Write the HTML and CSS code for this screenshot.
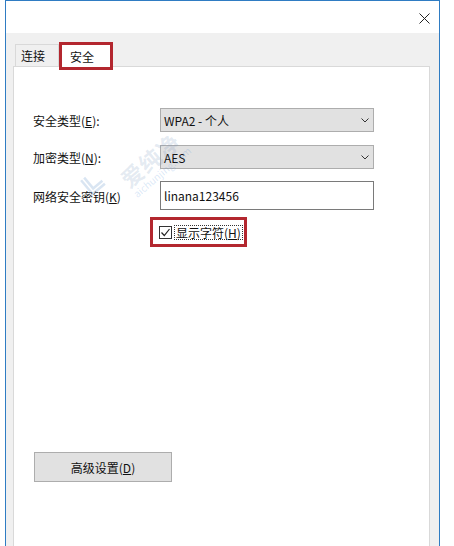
FILE: index.html
```html
<!DOCTYPE html>
<html lang="zh-CN">
<head>
<meta charset="utf-8">
<title>安全</title>
<link rel="stylesheet" href="styles.css">
</head>
<body>
<div class="window">
  <div class="titlebar">
    <svg class="close" width="11" height="11" viewBox="0 0 11 11"><path d="M0.5 0.5 L10.5 10.5 M10.5 0.5 L0.5 10.5" stroke="#222" stroke-width="1" fill="none"/></svg>
  </div>
  <div class="tabs">
    <div class="tab">连接</div>
    <div class="tab selected">安全</div>
  </div>
  <div class="panel">
    <div class="form">
      <div class="label">安全类型(<u>E</u>):</div>
      <div class="combo"><span>WPA2 - 个人</span><svg width="8" height="5" viewBox="0 0 8 5"><path d="M0.5 0.5 L4 4 L7.5 0.5" stroke="#333" fill="none"/></svg></div>
      <div class="label">加密类型(<u>N</u>):</div>
      <div class="combo"><span>AES</span><svg width="8" height="5" viewBox="0 0 8 5"><path d="M0.5 0.5 L4 4 L7.5 0.5" stroke="#333" fill="none"/></svg></div>
      <div class="label">网络安全密钥(<u>K</u>)</div>
      <div class="textbox">linana123456</div>
      <div></div>
      <div class="checkrow">
        <span class="checkbox"><svg width="11" height="11" viewBox="0 0 11 11"><path d="M1.5 5.5 L4.3 8.5 L9.5 2" stroke="#222" stroke-width="1.2" fill="none"/></svg></span>
        <span class="checklabel">显示字符(<u>H</u>)</span>
      </div>
    </div>
    <div class="button">高级设置(<u>D</u>)</div>
    <div class="watermark">
      <svg class="wm-logo" width="22" height="26" viewBox="0 0 22 26"><path d="M3 4 L3 22 L19 22 M7 4 L7 18 L19 18" stroke="rgba(120,160,210,0.28)" stroke-width="2.5" fill="none"/></svg>
      <div class="wm-text"><span class="wm-big">爱纯净</span><span class="wm-small">aichunjing.com</span></div>
    </div>
  </div>
</div>
</body>
</html>
```

FILE: styles.css
```css
html, body {
  margin: 0;
  padding: 0;
  background: #ffffff;
  overflow: hidden;
}
body {
  font-family: "Noto Sans CJK SC", "Noto Sans", sans-serif;
  font-size: 12px;
  color: #111;
}
u { text-decoration: underline; text-underline-offset: 1px; }
.window {
  margin-left: 5px;
  width: 435px;
  height: 546px;
  box-sizing: border-box;
  border: 1px solid #2f7cc3;
  border-bottom: none;
  background: #f0f0f0;
  display: flex;
  flex-direction: column;
}
.titlebar {
  height: 32px;
  background: #ffffff;
  display: flex;
  align-items: center;
  justify-content: flex-end;
  padding-right: 9px;
  flex-shrink: 0;
}
.close { display: block; margin-top: 2px; }
.tabs {
  display: flex;
  align-items: flex-end;
  margin-top: 11px;
  padding-left: 9px;
  height: 22px;
  flex-shrink: 0;
}
.tab {
  height: 22px;
  box-sizing: border-box;
  border: 1px solid #d9d9d9;
  border-bottom: none;
  background: #f0f0f0;
  padding: 0 5px;
  display: flex;
  align-items: center;
  width: 44px;
}
.tab.selected {
  width: 48px;
  margin-left: 3px;
  margin-bottom: -1px;
  background: #ffffff;
  border: none;
  padding-left: 8px;
  outline: 3px solid #b3272f;
  position: relative;
  z-index: 2;
}
.panel {
  margin-left: 7px;
  width: 417px;
  flex: 1;
  box-sizing: border-box;
  background: #ffffff;
  border: 1px solid #d9d9d9;
  border-bottom: none;
  padding: 41px 0 0 19px;
  position: relative;
}
.form {
  display: grid;
  grid-template-columns: 127px 214px;
  row-gap: 13px;
  align-items: center;
}
.label { white-space: nowrap; }
.combo {
  height: 24px;
  box-sizing: border-box;
  background: #e1e1e1;
  border: 1px solid #adadad;
  display: flex;
  align-items: center;
  justify-content: space-between;
  padding: 0 4px 0 3px;
}
.combo svg { display: block; }
.textbox {
  height: 29px;
  box-sizing: border-box;
  border: 1px solid #7a7a7a;
  background: #fff;
  display: flex;
  align-items: center;
  padding-left: 3px;
  margin-top: -1px;
}
.checkrow {
  margin-left: -7px;
  margin-top: -3px;
  width: 91px;
  height: 24px;
  box-sizing: border-box;
  outline: 3px solid #b3272f;
  display: flex;
  align-items: center;
  padding-left: 6px;
  gap: 2px;
}
.checkbox {
  width: 13px;
  height: 13px;
  box-sizing: border-box;
  border: 1px solid #333;
  background: #fff;
  display: flex;
  align-items: center;
  justify-content: center;
}
.checkbox svg { display: block; }
.checklabel {
  border: 1px dotted #333;
  padding: 0 1px;
  line-height: 13px;
}
.button {
  margin-top: 208px;
  margin-left: 1px;
  width: 138px;
  height: 30px;
  box-sizing: border-box;
  background: #e1e1e1;
  border: 1px solid #adadad;
  display: flex;
  align-items: center;
  justify-content: center;
}
.watermark {
  position: absolute;
  left: 62px;
  top: 26px;
  width: 100px;
  height: 100px;
  pointer-events: none;
}
.wm-logo {
  position: absolute;
  left: 6px;
  top: 76px;
  transform: rotate(-40deg);
}
.wm-text {
  position: absolute;
  left: 40px;
  top: 80px;
  transform: rotate(-40deg);
  transform-origin: left top;
  display: flex;
  flex-direction: column;
  color: rgba(120, 150, 190, 0.2);
  line-height: 1;
}
.wm-big { font-size: 22px; font-weight: bold; letter-spacing: 1px; }
.wm-small { font-size: 10px; color: rgba(90, 150, 220, 0.22); margin-top: 2px; }
```
